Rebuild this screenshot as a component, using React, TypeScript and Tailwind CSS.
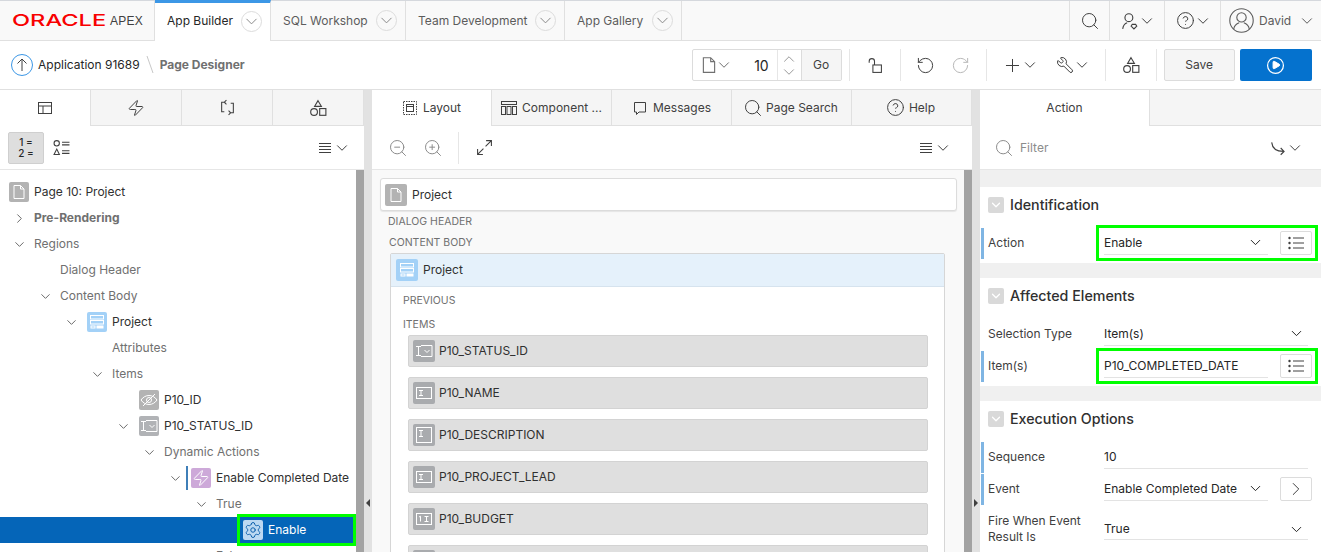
import type { ReactNode } from 'react'
import {
  ChevronDown,
  ChevronRight,
  ChevronUp,
  CircleHelp,
  Plus,
  RotateCcw,
  RotateCw,
  Search,
  Wrench,
  ZoomIn,
  ZoomOut,
  Zap,
  Settings,
  Play,
  Circle,
} from 'lucide-react'

// lucide scales its stroke with the icon, the screenshot has 1px lines everywhere
const thin = { strokeWidth: 1, absoluteStrokeWidth: true }

// chevron takes 13px in the row, whatever size it's drawn at
function Chev({ size = 18, className = '', Icon = ChevronDown }: { size?: number; className?: string; Icon?: typeof ChevronDown }) {
  return (
    <span className={`w-[13px] h-[13px] shrink-0 flex items-center justify-center ${className}`}>
      <Icon size={size} {...thin} className="shrink-0" />
    </span>
  )
}

// small line icons that the packages don't have in this shape
function Ico({ size = 16, className = '', children }: { size?: number; className?: string; children: ReactNode }) {
  return (
    <svg width={size} height={size} viewBox="0 0 16 16" fill="none" stroke="currentColor" strokeWidth={1} className={className}>
      {children}
    </svg>
  )
}

const PageIcon = ({ size = 16, className = '' }: { size?: number; className?: string }) => (
  <Ico size={size} className={className}>
    <path d="M3 1.5h6.5L13 5v9.5H3zM9.5 1.5V5H13" />
  </Ico>
)

const MenuLines = () => (
  <Ico size={16}>
    <path d="M2 3.5h12M2 6.5h12M2 9.5h12M2 12.5h12" />
  </Ico>
)

const Shapes = () => (
  <Ico size={18}>
    <path d="M8 1.5l3 5H5z" />
    <circle cx="4.5" cy="11.5" r="3" />
    <rect x="9.5" y="8.5" width="5.5" height="6" />
  </Ico>
)

const ListBtnIcon = () => (
  <svg width="16" height="14" viewBox="0 0 16 14" fill="none" stroke="currentColor" strokeWidth={1}>
    <circle cx="1.5" cy="2" r="1.2" fill="currentColor" stroke="none" />
    <circle cx="1.5" cy="7" r="1.2" fill="currentColor" stroke="none" />
    <circle cx="1.5" cy="12" r="1.2" fill="currentColor" stroke="none" />
    <path d="M5 2h11M5 7h11M5 12h11" />
  </svg>
)

const RegionGlyph = () => (
  <svg width="16" height="16" viewBox="0 0 16 16" fill="none" stroke="#fff" strokeWidth={1}>
    <rect x="1.5" y="1.5" width="13" height="3.5" />
    <rect x="1.5" y="6.5" width="13" height="3.5" />
    <rect x="2" y="12" width="4" height="2" />
    <rect x="8" y="12" width="6" height="2" fill="#fff" />
  </svg>
)

const SelectGlyph = () => (
  <svg width="18" height="14" viewBox="0 0 18 14" fill="none" stroke="#fff" strokeWidth={1}>
    <path d="M1 2.5h5M3.5 2.5v9M1 11.5h5M6 1.5h11v11H6" />
    <path d="M9.5 6l2.5 2.5L14.5 6" />
  </svg>
)

const TextGlyph = ({ tall }: { tall?: boolean }) => (
  <svg width="18" height="18" viewBox="0 0 18 18" fill="none" stroke="#fff" strokeWidth={1}>
    {tall ? <rect x="1.5" y="1.5" width="15" height="15" /> : <rect x="1.5" y="3.5" width="15" height="11" />}
    <path d={tall ? 'M4 4.5h4M6 4.5v6M4 10.5h4' : 'M4 6.5h4M6 6.5v5M4 11.5h4'} />
  </svg>
)

const NumberGlyph = () => (
  <svg width="18" height="18" viewBox="0 0 18 18" fill="none" stroke="#fff" strokeWidth={1}>
    <rect x="1.5" y="3.5" width="15" height="11" />
    <path d="M4 7l1.5-.8v5.3M9.5 6.5h4M11.5 6.5v5M9.5 11.5h4" />
  </svg>
)

const HiddenGlyph = () => (
  <svg width="18" height="18" viewBox="0 0 18 18" fill="none" stroke="#fff" strokeWidth={1}>
    <path d="M1 9c2-3 5-4.500 8-4.500s6 1.500 8 4.500c-2 3-5 4.500-8 4.500S3 12 1 9z" />
    <circle cx="9" cy="9" r="2.500" />
    <path d="M3 15L15 3" />
  </svg>
)

type TreeRow = {
  level: number
  label: string
  chevron?: 'down' | 'right'
  icon?: ReactNode
  iconBg?: string
  tone?: 'dark' | 'gray' | 'bold'
  bar?: boolean
  selected?: boolean
}

const treeRows: TreeRow[] = [
  { level: -1, label: 'Page 10: Project', icon: <PageIcon className="text-white" />, iconBg: 'bg-[#b3b3b3]', tone: 'dark' },
  { level: 0, label: 'Pre-Rendering', chevron: 'right', tone: 'bold' },
  { level: 0, label: 'Regions', chevron: 'down' },
  { level: 1, label: 'Dialog Header' },
  { level: 1, label: 'Content Body', chevron: 'down' },
  { level: 2, label: 'Project', chevron: 'down', icon: <RegionGlyph />, iconBg: 'bg-[#a3d1f7]', tone: 'dark' },
  { level: 3, label: 'Attributes' },
  { level: 3, label: 'Items', chevron: 'down' },
  { level: 4, label: 'P10_ID', icon: <HiddenGlyph />, iconBg: 'bg-[#b3b3b3]', tone: 'dark' },
  { level: 4, label: 'P10_STATUS_ID', chevron: 'down', icon: <SelectGlyph />, iconBg: 'bg-[#b1b3b6]', tone: 'dark' },
  { level: 5, label: 'Dynamic Actions', chevron: 'down' },
  { level: 6, label: 'Enable Completed Date', chevron: 'down', icon: <Zap size={18} color="#fff" {...thin} />, iconBg: 'bg-[#cda9d9]', tone: 'dark', bar: true },
  { level: 7, label: 'True', chevron: 'down' },
  { level: 8, label: 'Enable', icon: <Settings size={18} color="#0f62ae" {...thin} />, iconBg: 'bg-[#bcd9f2]', selected: true },
  { level: 7, label: 'False', chevron: 'down' },
]

// the last one only shows its top edge at the bottom of the window
const layoutItems = [
  { name: 'P10_STATUS_ID', glyph: <SelectGlyph /> },
  { name: 'P10_NAME', glyph: <TextGlyph /> },
  { name: 'P10_DESCRIPTION', glyph: <TextGlyph tall /> },
  { name: 'P10_PROJECT_LEAD', glyph: <TextGlyph /> },
  { name: 'P10_BUDGET', glyph: <NumberGlyph /> },
  { name: '', glyph: <TextGlyph /> },
]

function NavTab({ label, width, active }: { label: string; width: string; active?: boolean }) {
  return (
    <div
      className={`flex items-center justify-between pl-3 pr-2 border-r border-[#e0e0e0] ${width} ${
        active ? 'bg-white border-t-[3px] border-t-[#3c97e6] text-[#262626] h-[41px] -mb-px -mt-px pb-[2px]' : 'text-[#5c5c5c]'
      }`}
    >
      <span>{label}</span>
      <span className="w-[21px] h-[21px] rounded-full border border-[#dcdcdc] flex items-center justify-center text-[#8a8a8a]">
        <Chev size={19} />
      </span>
    </div>
  )
}

function HeaderCell({ width, children }: { width: string; children: ReactNode }) {
  return <div className={`flex items-center justify-center border-l border-[#e0e0e0] text-[#404040] ${width}`}>{children}</div>
}

function Divider({ className = '' }: { className?: string }) {
  return <div className={`w-px h-[32px] bg-[#e6e6e6] ${className}`} />
}

function PanelTab({ width, active, children }: { width: string; active?: boolean; children: ReactNode }) {
  return (
    <div
      className={`${width} h-[36px] flex items-center justify-center gap-[5px] text-[#404040] border-r border-[#e0e0e0] ${
        active ? 'bg-white' : 'bg-[#f5f5f5] border-b'
      }`}
    >
      {children}
    </div>
  )
}

function TreeLine({ row }: { row: TreeRow }) {
  const textClass = row.selected
    ? 'text-white'
    : row.tone === 'dark'
      ? 'text-[#303030]'
      : row.tone === 'bold'
        ? 'text-[#707070] font-bold'
        : 'text-[#707070]'
  return (
    <div
      className={`h-[26px] flex items-center shrink-0 relative ${row.selected ? 'bg-[#0565b8]' : ''}`}
      style={{ paddingLeft: Math.max(0, row.level) * 26 + 8 }}
    >
      {row.level >= 0 && (
        <span className="w-[26px] pr-1 flex justify-center text-[#6b6b6b] shrink-0">
          {row.chevron === 'down' && <Chev size={15} />}
          {row.chevron === 'right' && <Chev size={15} Icon={ChevronRight} />}
        </span>
      )}
      {row.icon && (
        <span className={`w-[20px] h-[20px] ml-px mr-[5px] rounded-[2px] flex items-center justify-center shrink-0 ${row.iconBg}`}>{row.icon}</span>
      )}
      {row.bar && <span className="absolute left-[186px] top-[1px] w-[2px] h-[24px] bg-[#3f7fb8]" />}
      <span className={`whitespace-nowrap ${textClass}`}>{row.label}</span>
      {row.selected && <span className="absolute left-[237px] -top-[3px] right-0 -bottom-[3px] border-[3px] border-[#00ff00]" />}
    </div>
  )
}

function SectionHead({ title }: { title: string }) {
  return (
    <div className="h-[36px] flex items-center pl-[8px] gap-[6px] shrink-0 mb-[5px]">
      <span className="w-[16px] h-[16px] rounded-[2px] bg-[#d9d9d9] flex items-center justify-center text-white">
        <ChevronDown size={14} strokeWidth={1.25} absoluteStrokeWidth />
      </span>
      <span className="text-[14.25px] font-medium text-[#303030]">{title}</span>
    </div>
  )
}

function Field({
  label,
  value,
  bar,
  tall,
  select,
  button,
  green,
}: {
  label: ReactNode
  value: string
  bar?: boolean
  tall?: boolean
  select?: boolean
  button?: ReactNode
  green?: boolean
}) {
  return (
    <div className={`${tall ? 'h-[48px]' : 'h-[32px]'} flex items-start relative shrink-0 pl-[1px]`}>
      <span className={`w-[3px] h-[31px] shrink-0 ${bar ? 'bg-[#7fb5e3]' : ''}`} />
      <span className={`w-[120px] pl-[4px] text-[#404040] leading-[16px] flex items-center ${tall ? 'h-[46px]' : 'h-[30px]'}`}>
        <span>{label}</span>
      </span>
      <div
        className={`${button ? 'w-[164px]' : 'w-[204px]'} ${tall ? 'mt-[10px] pt-[3px]' : 'mt-[3px]'} h-[24px] border-b border-[#e3e3e3] flex items-center justify-between text-[#262626] shrink-0`}
      >
        <span className="whitespace-nowrap">{value}</span>
        {select && <Chev size={17} className={button ? 'mr-[6px]' : 'mr-[5px]'} />}
      </div>
      {button && (
        <span className="ml-[12px] mt-[3px] w-[32px] h-[24px] border border-[#dcdcdc] rounded-[2px] bg-white flex items-center justify-center text-[#404040]">
          {button}
        </span>
      )}
      {green && <span className="absolute left-[116px] -top-[3px] w-[222px] h-[36px] border-[3px] border-[#00ff00] pointer-events-none" />}
    </div>
  )
}

export default function App() {
  return (
    <div className="w-[1321px] h-[552px] overflow-hidden flex flex-col bg-white text-[12px] text-[#303030] font-['Inter','Liberation_Sans',sans-serif]">
      {/* top navigation */}
      <div className="h-[41px] shrink-0 flex bg-[#f9f9f9] border-t border-t-[#d5d8dd] border-b border-b-[#e0e0e0]">
        <div className="w-[155px] flex items-center pl-[12px] border-r border-[#e0e0e0] shrink-0">
          <span className="w-[94px] font-medium text-[16.5px] text-[#f80000] origin-left scale-x-[1.43] inline-block leading-none">ORACLE</span>
          <span className="text-[12px] text-[#404040] ml-[4px] font-['Liberation_Sans',sans-serif] tracking-[0.02em]">APEX</span>
        </div>
        <NavTab label="App Builder" width="w-[116px]" active />
        <NavTab label="SQL Workshop" width="w-[135px]" />
        <NavTab label="Team Development" width="w-[159px]" />
        <NavTab label="App Gallery" width="w-[117px]" />
        <div className="flex-1" />
        <HeaderCell width="w-[40px]">
          <Search size={20} {...thin} />
        </HeaderCell>
        <HeaderCell width="w-[55px]">
          <Ico size={18}>
            <circle cx="7" cy="5" r="3.500" />
            <path d="M1.500 15c.5-3 2-5 4-5.500M9 12.500l2.500 2.500 2.500-2.500-1-1.500h-3z" />
          </Ico>
          <Chev className="ml-px" />
        </HeaderCell>
        <HeaderCell width="w-[56px]">
          <CircleHelp size={19} {...thin} />
          <Chev className="ml-px" />
        </HeaderCell>
        <div className="w-[101px] flex items-center pl-[8px] border-l border-[#e0e0e0] text-[#5c5c5c]">
          <Ico size={25}>
            <circle cx="8" cy="8" r="7.500" strokeWidth={0.7} />
            <circle cx="8" cy="6" r="3" strokeWidth={0.7} />
            <path d="M3 13.500c.5-2.500 2-3.500 3.500-4M13 13.500c-.5-2.500-2-3.500-3.500-4" strokeWidth={0.7} />
          </Ico>
          <span className="ml-[5px]">David</span>
          <Chev className="ml-[9px]" />
        </div>
      </div>

      {/* page designer toolbar */}
      <div className="h-[49px] shrink-0 flex items-center border-b border-[#e0e0e0] text-[#404040]">
        <span className="ml-[11px] w-[22px] h-[22px] rounded-full border border-[#3c97e6] flex items-center justify-center text-[#404040]">
          <svg width="12" height="14" viewBox="0 0 12 14" fill="none" stroke="currentColor" strokeWidth={1}>
            <path d="M6 13V1M1.500 5.500L6 1l4.500 4.500" />
          </svg>
        </span>
        <span className="ml-[5px] text-[#262626]">Application 91689</span>
        <svg width="10" height="20" viewBox="0 0 10 20" className="ml-[6px]" fill="none" stroke="#c8c8c8" strokeWidth={1}>
          <path d="M1 1l6 17" />
        </svg>
        <span className="ml-[4px] font-bold text-[#707070]">Page Designer</span>

        <div className="ml-[447px] w-[150px] h-[32px] flex items-center border border-[#dcdcdc] rounded-[2px] shrink-0">
          <PageIcon size={18} className="ml-[7px] text-[#707070]" />
          <Chev className="text-[#707070]" />
          <span className="w-[38px] text-right text-[14px] text-[#262626] mt-px">10</span>
          <span className="ml-[8px] w-[24px] h-full border-l border-[#e6e6e6] flex flex-col items-center justify-center text-[#9a9a9a]">
            <Chev Icon={ChevronUp} />
            <Chev />
          </span>
          <span className="flex-1 h-full bg-[#f5f5f5] border-l border-[#dcdcdc] flex items-center justify-center text-[#404040]">Go</span>
        </div>
        <Divider className="ml-[7px]" />
        <span className="w-[50px] flex justify-center">
          <Ico size={17}>
            <rect x="6.500" y="7.500" width="8" height="7" />
            <path d="M8 7.500V4a2.500 2.500 0 0 0-5 0v1.500" />
          </Ico>
        </span>
        <Divider />
        <span className="w-[50px] flex justify-center">
          <RotateCcw size={19} {...thin} />
        </span>
        <span className="w-[20px] flex justify-center text-[#b8b8b8]">
          <RotateCw size={19} {...thin} />
        </span>
        <Divider className="ml-[15px]" />
        <span className="w-[52px] pl-[15px] flex items-center">
          <Plus size={21} {...thin} />
          <Chev className="ml-px" />
        </span>
        <span className="w-[66px] pl-[17px] flex items-center">
          <Wrench size={18} {...thin} className="-scale-x-100" />
          <Chev className="ml-[2px]" />
        </span>
        <Divider />
        <span className="w-[50px] flex justify-center">
          <Shapes />
        </span>
        <Divider />
        <span className="ml-[7px] w-[71px] h-[32px] bg-[#f5f5f5] border border-[#dcdcdc] rounded-[2px] flex items-center justify-center text-[#404040]">Save</span>
        <span className="ml-[5px] w-[72px] h-[32px] bg-[#0572ce] rounded-[2px] flex items-center justify-center relative text-white">
          <Circle size={19} strokeWidth={1.25} absoluteStrokeWidth />
          <Play size={10} fill="#fff" {...thin} className="absolute" />
        </span>
      </div>

      {/* three panels */}
      <div className="flex-1 min-h-0 flex">
        {/* tree */}
        <div className="w-[364px] shrink-0 flex flex-col">
          <div className="flex shrink-0">
            <PanelTab width="w-[91px]" active>
              <Ico size={16}>
                <rect x="1.500" y="2.500" width="13" height="11" />
                <path d="M1.500 6h13M6 6v7.500" />
              </Ico>
            </PanelTab>
            <PanelTab width="w-[91px]">
              <Zap size={18} {...thin} />
            </PanelTab>
            <PanelTab width="w-[91px]">
              <Ico size={17}>
                <path d="M6 3H2.500v9H5M10 13h3.500V4H11M7 1l-2 2 2 2M9 11l2 2-2 2" />
              </Ico>
            </PanelTab>
            <PanelTab width="w-[91px]">
              <Shapes />
            </PanelTab>
          </div>
          <div className="h-[44px] shrink-0 flex items-center pl-[8px] border-b border-[#e6e6e6] text-[#404040]">
            <span className="w-[36px] h-[32px] bg-[#dedede] border border-[#cfcfcf] rounded-[2px] flex items-center justify-center">
              <span className="text-[10px] leading-[11px] text-center font-medium text-[#262626]">
                1 =<br />2 =
              </span>
            </span>
            <span className="ml-[9px] w-[17px]">
              <Ico size={17}>
                <circle cx="3.500" cy="4" r="2.500" />
                <path d="M3.500 9.500l2.500 5H1zM8.500 3h7M8.500 5.500h7M8.500 11h7M8.500 13.500h7" />
              </Ico>
            </span>
            <span className="ml-[247px] flex items-center">
              <MenuLines />
              <Chev className="ml-[2px]" />
            </span>
          </div>
          <div className="flex-1 min-h-0 flex overflow-hidden">
            <div className="w-[356px] shrink-0 pt-[9px] flex flex-col">
              {treeRows.map(row => (
                <TreeLine key={row.label} row={row} />
              ))}
            </div>
            <div className="w-[8px] bg-[#a3a3a3]" />
          </div>
        </div>

        {/* splitter */}
        <div className="w-[8px] shrink-0 bg-[#e2e2e2] flex flex-col items-center pt-[409px]">
          <span className="w-0 h-0 border-y-[4px] border-y-transparent border-r-[4px] border-r-[#404040]" />
        </div>

        {/* layout */}
        <div className="w-[600px] shrink-0 flex flex-col">
          <div className="flex shrink-0">
            <PanelTab width="w-[120px]" active>
              <Ico size={16}>
                <rect x="1.500" y="1.500" width="13" height="13" strokeDasharray="1.500 1" />
                <rect x="4.500" y="4.500" width="7" height="7" />
                <path d="M4.500 6.500h7" />
              </Ico>
              Layout
            </PanelTab>
            <PanelTab width="w-[120px]">
              <Ico size={16}>
                <rect x="0.500" y="1.500" width="15" height="3" />
                <rect x="0.500" y="6.500" width="4" height="8" />
                <rect x="6" y="6.500" width="4" height="8" />
                <rect x="11.500" y="6.500" width="4" height="8" />
              </Ico>
              Component ...
            </PanelTab>
            <PanelTab width="w-[120px]">
              <Ico size={16}>
                <path d="M2.500 2.500h11v9.500H7l-2.500 2.500V12h-2z" />
              </Ico>
              Messages
            </PanelTab>
            <PanelTab width="w-[120px]">
              <Search size={20} {...thin} className="-mx-[2px]" />
              Page Search
            </PanelTab>
            <PanelTab width="w-[120px]">
              <CircleHelp size={19} {...thin} className="-mx-[1.5px]" />
              Help
            </PanelTab>
          </div>
          <div className="h-[44px] shrink-0 flex items-center border-b border-[#e6e6e6] text-[#8c8c8c]">
            <ZoomOut size={20} {...thin} className="ml-[16px]" />
            <ZoomIn size={20} {...thin} className="ml-[15px]" />
            <Divider className="ml-[15px]" />
            <Ico size={17} className="ml-[17px] text-[#404040]">
              <path d="M9.500 1.500h5v5M14.500 1.500l-5.500 5.500M6.500 14.500h-5v-5M1.500 14.500L7 9" />
            </Ico>
            <span className="ml-[425px] flex items-center text-[#404040]">
              <MenuLines />
              <Chev className="ml-[2px]" />
            </span>
          </div>
          <div className="flex-1 min-h-0 flex overflow-hidden">
            <div className="w-[592px] shrink-0 bg-[#f9f9f9] pt-[8px] pl-[8px] flex flex-col">
              <div className="w-[577px] h-[33px] shrink-0 bg-white border border-[#dcdcdc] rounded-[3px] shadow-[0_1px_1px_rgba(0,0,0,0.08)] flex items-center pl-[4px]">
                <span className="w-[22px] h-[22px] rounded-[2px] bg-[#b3b3b3] flex items-center justify-center">
                  <PageIcon className="text-white" />
                </span>
                <span className="ml-[5px] text-[#303030]">Project</span>
              </div>
              <div className="mt-[5px] ml-[8px] h-[12px] text-[10.5px] leading-[12px] text-[#707070] uppercase">Dialog Header</div>
              <div className="mt-[9px] ml-[9px] h-[12px] text-[10.5px] leading-[12px] text-[#707070] uppercase">Content Body</div>
              <div className="mt-[4px] ml-[10px] w-[555px] shrink-0 bg-white border border-[#d6d6d6] rounded-t-[2px] flex flex-col">
                <div className="h-[33px] shrink-0 bg-[#e5f1fb] border-b border-[#d6e3ee] flex items-center pl-[5px]">
                  <span className="w-[22px] h-[22px] rounded-[2px] bg-[#a3d1f7] flex items-center justify-center">
                    <RegionGlyph />
                  </span>
                  <span className="ml-[5px] text-[#303030]">Project</span>
                </div>
                <div className="mt-[8px] ml-[12px] h-[12px] text-[10.5px] leading-[12px] text-[#707070] uppercase">Previous</div>
                <div className="mt-[12px] ml-[12px] h-[12px] text-[10.5px] leading-[12px] text-[#707070] uppercase">Items</div>
                <div className="mt-[4px] ml-[17px] w-[520px] flex flex-col gap-[10px]">
                  {layoutItems.map(item => (
                    <div key={item.name} className="h-[32px] shrink-0 bg-[#dfdfdf] border border-[#d3d3d3] rounded-[2px] flex items-center pl-[4px]">
                      <span className="w-[22px] h-[22px] rounded-[2px] bg-[#a9abae] flex items-center justify-center">{item.glyph}</span>
                      <span className="ml-[4px] text-[#303030]">{item.name}</span>
                    </div>
                  ))}
                </div>
              </div>
            </div>
            <div className="w-[8px] bg-[#a3a3a3]" />
          </div>
        </div>

        {/* splitter */}
        <div className="w-[8px] shrink-0 bg-[#e2e2e2] flex flex-col items-center pt-[409px]">
          <span className="w-0 h-0 border-y-[4px] border-y-transparent border-l-[4px] border-l-[#404040]" />
        </div>

        {/* properties */}
        <div className="flex-1 min-w-0 flex flex-col">
          <div className="flex shrink-0">
            <PanelTab width="w-[170px]" active>
              Action
            </PanelTab>
            <div className="flex-1 h-[36px] bg-[#f5f5f5] border-b border-[#e0e0e0]" />
          </div>
          <div className="h-[44px] shrink-0 flex items-center pl-[14px] border-b border-[#e6e6e6] text-[#8c8c8c]">
            <Search size={20} {...thin} />
            <span className="ml-[6px]">Filter</span>
            <span className="ml-[222px] flex items-center text-[#404040]">
              <Ico size={18}>
                <path d="M1.500 3c.5 5 4 8 10.500 8M9.500 8l3 3-3 3" />
              </Ico>
              <Chev />
            </span>
          </div>
          <div className="flex-1 min-h-0 overflow-hidden bg-[#f0f0f0] pt-[17px] flex flex-col">
            <div className="h-[76px] shrink-0 bg-white flex flex-col">
              <SectionHead title="Identification" />
              <Field label="Action" value="Enable" bar select green button={<ListBtnIcon />} />
            </div>
            <div className="mt-[15px] h-[108px] shrink-0 bg-white flex flex-col">
              <SectionHead title="Affected Elements" />
              <Field label="Selection Type" value="Item(s)" select />
              <Field label="Item(s)" value="P10_COMPLETED_DATE" bar green button={<ListBtnIcon />} />
            </div>
            <div className="mt-[15px] flex-1 bg-white flex flex-col">
              <SectionHead title="Execution Options" />
              <Field label="Sequence" value="10" bar />
              <Field label="Event" value="Enable Completed Date" bar select button={<ChevronRight size={22} {...thin} />} />
              <Field
                label={
                  <>
                    Fire When Event
                    <br />
                    Result Is
                  </>
                }
                value="True"
                select
                tall
              />
            </div>
          </div>
        </div>
      </div>
    </div>
  )
}
